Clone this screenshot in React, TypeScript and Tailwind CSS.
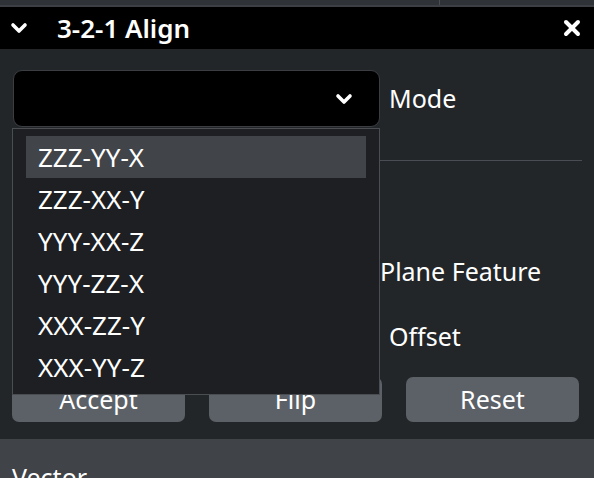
import { ChevronDown, X } from "lucide-react";

const modes = ["ZZZ-YY-X", "ZZZ-XX-Y", "YYY-XX-Z", "YYY-ZZ-X", "XXX-ZZ-Y", "XXX-YY-Z"];

export default function App() {
  return (
    <div className="w-[594px] h-[478px] overflow-hidden bg-[#232629] text-white font-['Noto_Sans',sans-serif]">
      {/* top strip of the panel above */}
      <div className="flex h-[7px] bg-[#2f3338] border-b-2 border-[#3c4045]">
        <div className="w-[440px] border-r border-[#4a4e53]" />
      </div>

      {/* header */}
      <div className="flex items-center h-[42px] bg-black pl-[7px] pr-[10px]">
        <ChevronDown size={24} strokeWidth={3.6} className="text-white" />
        <span className="ml-[26px] text-[26px] font-semibold leading-none">3-2-1 Align</span>
        <X size={24} strokeWidth={4} className="ml-auto text-white" />
      </div>

      <div className="relative px-[12px] pt-[21px]">
        {/* mode row */}
        <div className="flex items-center gap-[9px]">
          <div className="flex items-center justify-end w-[367px] h-[57px] ml-[1px] bg-black border border-[#3a3e43] rounded-[9px] pr-[23px]">
            <ChevronDown size={24} strokeWidth={3.6} className="text-white" />
          </div>
          <span className="text-[25px] leading-none">Mode</span>
        </div>

        <div className="ml-[368px] mt-[33px] h-px bg-[#4a4e54]" />

        <div className="ml-[368px] mt-[98px] text-[25px] leading-none">Plane Feature</div>
        <div className="ml-[377px] mt-[40px] text-[25px] leading-none">Offset</div>

        {/* buttons */}
        <div className="flex gap-[24px] mt-[28px]">
          {["Accept", "Flip", "Reset"].map((b) => (
            <button
              key={b}
              className="w-[173px] h-[45px] rounded-[7px] bg-[#5c6167] text-[25px] leading-none text-white"
            >
              {b}
            </button>
          ))}
        </div>

        {/* open dropdown list */}
        <div className="absolute left-[12px] top-[79px] w-[368px] h-[267px] bg-[#1d1f23] border border-[#4a4e53] pt-[7px] pl-[13px] pr-[13px]">
          {modes.map((m, i) => (
            <div
              key={m}
              className={`flex items-center h-[42px] pl-[12px] text-[26px] leading-none ${i === 0 ? "bg-[#414549]" : ""}`}
            >
              {m}
            </div>
          ))}
        </div>
      </div>

      {/* next section */}
      <div className="mt-[17px] h-[60px] bg-[#404347] pl-[12px] pt-[26px]">
        <span className="text-[25px] leading-none">Vector</span>
      </div>
    </div>
  );
}
